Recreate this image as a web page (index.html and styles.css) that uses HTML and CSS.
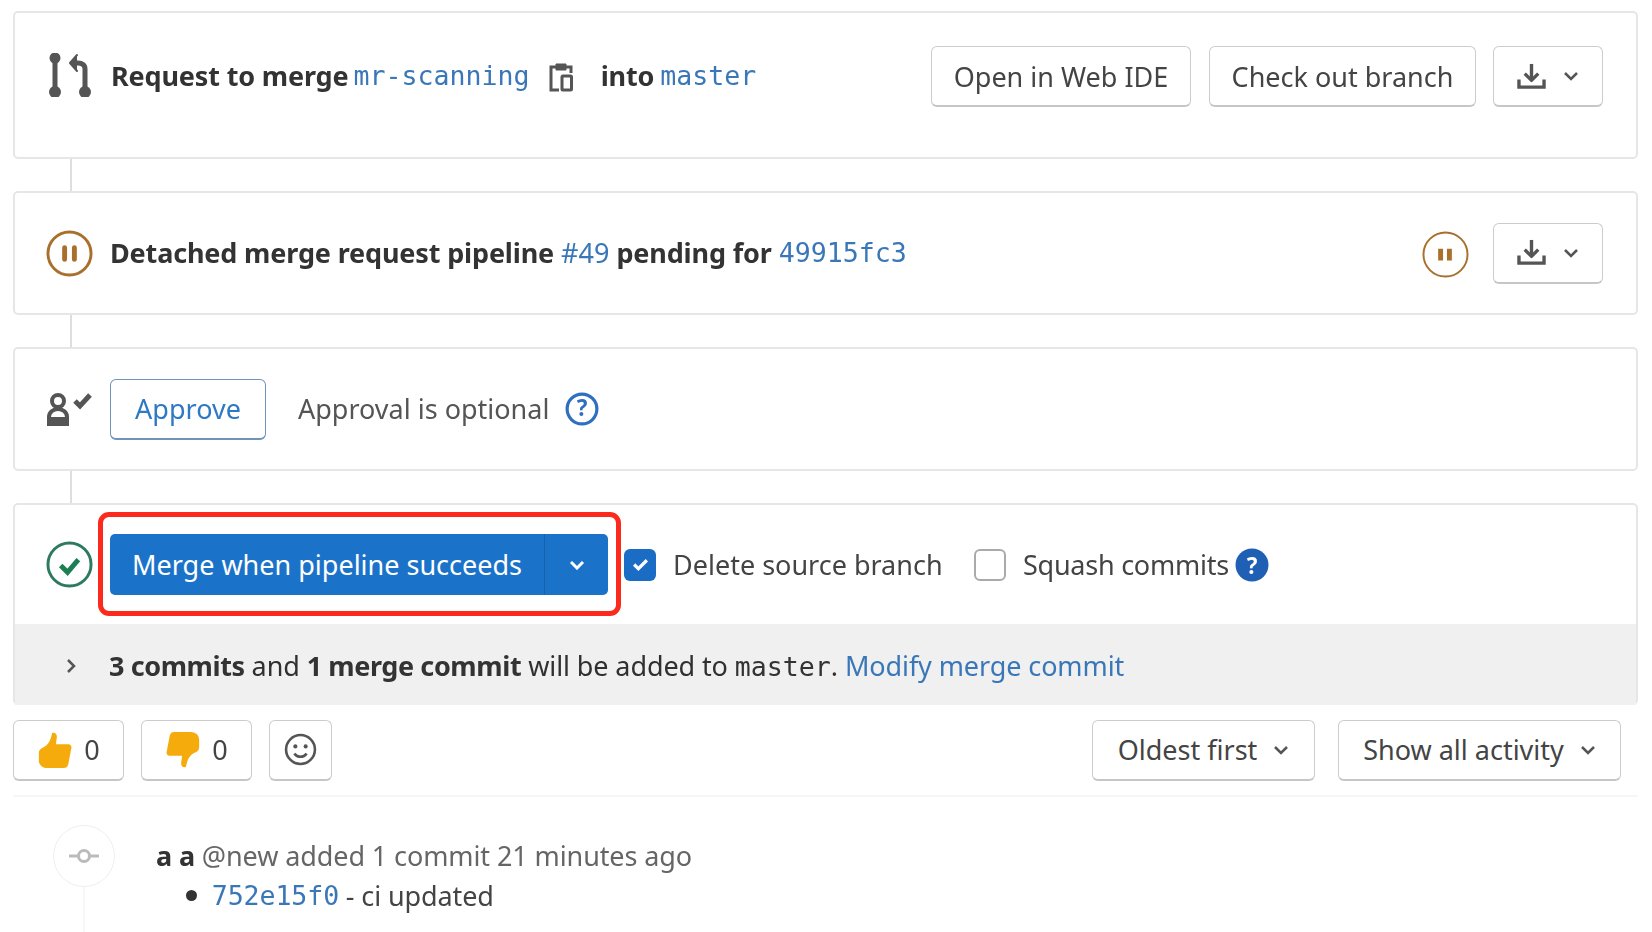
FILE: index.html
```html
<!DOCTYPE html>
<html lang="en">
<head>
	<meta charset="UTF-8">
	<title>Merge request</title>
	<link rel="stylesheet" href="styles.css">
</head>
<body>
	<div class="page">
		<div class="card card-branch">
			<svg class="ico-mr" viewBox="0 0 44 44" fill="none" stroke="#555" stroke-width="5" stroke-linecap="round" stroke-linejoin="round">
				<path d="M7 4v36M37 38V16c0-4-3-6-7-6h-3"/>
				<path d="M29 2l-7 8 7 8" fill="#555" stroke-width="2"/>
				<circle cx="7" cy="5" r="3" fill="#555"/><circle cx="7" cy="39" r="3.5" fill="#555"/><circle cx="37" cy="39" r="3.5" fill="#555"/>
			</svg>
			<div class="title">
				<b>Request to merge</b><a class="mono first">mr-scanning</a>
				<svg class="ico-copy" viewBox="0 0 24 30" fill="none" stroke="#555" stroke-width="3"><path d="M7 5H2v23h8M17 5h5v6"/><path d="M7 2h10v6H7z" fill="#555" stroke-width="1"/><rect x="13" y="14" width="9.500" height="14" rx="1"/></svg>
				<b>into</b><a class="mono second">master</a>
			</div>
			<div class="actions">
				<span class="btn btn-ide">Open in Web IDE</span>
				<span class="btn btn-checkout">Check out branch</span>
				<span class="btn btn-dl">
					<svg class="ico-dl" viewBox="0 0 30 28" fill="none" stroke="#555" stroke-width="3.500"><path d="M15 1v16" /><path d="M8 11l7 7 7-7" stroke-linejoin="round"/><path d="M2 17v8h26v-8"/></svg>
					<svg class="chev" viewBox="0 0 16 10"><path d="M2 2l6 6 6-6" fill="none" stroke="#555" stroke-width="2.500"/></svg>
				</span>
			</div>
		</div>
		<div class="link-line"></div>
		<div class="card card-pipe">
			<svg class="status" viewBox="0 0 48 48"><circle cx="24" cy="24" r="22" fill="#fff" stroke="#a8702c" stroke-width="3"/><path d="M19 18v12M29 18v12" stroke="#a8702c" stroke-width="5" stroke-linecap="round"/></svg>
			<div class="title">
				<b>Detached merge request pipeline</b><a class="num">#49</a><b>pending for</b><a class="mono sha">49915fc3</a>
			</div>
			<div class="actions">
				<svg class="status status-small" viewBox="0 0 48 48"><circle cx="24" cy="24" r="22.500" fill="#fff" stroke="#a8702c" stroke-width="2"/><path d="M19 18v12M28 18v12" stroke="#a8702c" stroke-width="5"/></svg>
				<span class="btn btn-dl">
					<svg class="ico-dl" viewBox="0 0 30 28" fill="none" stroke="#555" stroke-width="3.500"><path d="M15 1v16" /><path d="M8 11l7 7 7-7" stroke-linejoin="round"/><path d="M2 17v8h26v-8"/></svg>
					<svg class="chev" viewBox="0 0 16 10"><path d="M2 2l6 6 6-6" fill="none" stroke="#555" stroke-width="2.500"/></svg>
				</span>
			</div>
		</div>
		<div class="link-line"></div>
		<div class="card card-approve">
			<svg class="ico-approve" viewBox="0 0 48 34">
				<circle cx="12" cy="9" r="6" fill="none" stroke="#555" stroke-width="4"/>
				<path d="M3 32V25a9 8 0 0 1 18 0v7z" fill="none" stroke="#555" stroke-width="4"/>
				<path d="M1 25h22v9H1z" fill="#555"/>
				<path d="M29 9l5 5 10-11" fill="none" stroke="#555" stroke-width="5"/>
			</svg>
			<span class="btn btn-approve">Approve</span>
			<span class="optional">Approval is optional</span>
			<svg class="help" viewBox="0 0 32 32"><circle cx="16" cy="16" r="14" fill="none" stroke="#2f6fc0" stroke-width="3"/><text x="16" y="23" text-anchor="middle" class="help-q">?</text></svg>
		</div>
		<div class="link-line"></div>
		<div class="card card-merge">
			<div class="merge-row">
				<svg class="status" viewBox="0 0 48 48"><circle cx="24" cy="24" r="22" fill="#fff" stroke="#2d7a5f" stroke-width="3"/><path d="M15 25l7 7 11-13" fill="none" stroke="#1a7f52" stroke-width="5"/></svg>
				<div class="merge-btn">
					<span class="merge-label">Merge when pipeline succeeds</span>
					<span class="merge-caret"><svg class="chev" viewBox="0 0 16 10"><path d="M2 2l6 6 6-6" fill="none" stroke="#fff" stroke-width="3"/></svg></span>
					<div class="annot"></div>
				</div>
				<span class="check check-on"><svg viewBox="0 0 16 12"><path d="M2 6l4 4 8-8" fill="none" stroke="#fff" stroke-width="3"/></svg></span>
				<span class="opt opt-delete">Delete source branch</span>
				<span class="check"></span>
				<span class="opt opt-squash">Squash commits</span>
				<svg class="help help-solid" viewBox="0 0 32 32"><circle cx="16" cy="16" r="15.500" fill="#1f5fb4"/><text x="16" y="24" text-anchor="middle" class="help-q help-w">?</text></svg>
			</div>
			<div class="merge-foot">
				<svg class="foot-chev" viewBox="0 0 10 16"><path d="M2 2l6 6-6 6" fill="none" stroke="#555" stroke-width="2.500"/></svg>
				<span class="foot-text"><b>3 commits</b> and <b>1 merge commit</b> will be added to <code>master</code>. <a>Modify merge commit</a></span>
			</div>
		</div>
		<div class="award-row">
			<span class="btn btn-award">
				<svg class="emoji" viewBox="0 0 36 40"><path d="M15 2c3-1 5 1 5 4l-1 8h13c3 0 4 3 3 5l-3 16c-1 3-2 4-5 4H10c-5 0-9-3-9-8V23c0-3 2-5 5-6 4-2 7-6 8-11z" fill="#f6ab0c"/></svg>
				<span>0</span>
			</span>
			<span class="btn btn-award">
				<svg class="emoji" viewBox="0 0 36 40"><path d="M21 38c-3 1-5-1-5-4l1-8H4c-3 0-4-3-3-5L4 5c1-3 2-4 5-4h17c5 0 9 3 9 8v8c0 3-2 5-5 6-4 2-7 6-8 11z" fill="#f6ab0c"/></svg>
				<span>0</span>
			</span>
			<span class="btn btn-smile">
				<svg viewBox="0 0 32 32"><circle cx="16" cy="16" r="14" fill="none" stroke="#555" stroke-width="2.500"/><circle cx="11" cy="13" r="2" fill="#555"/><circle cx="21" cy="13" r="2" fill="#555"/><path d="M10 20c3 4 9 4 12 0" fill="none" stroke="#555" stroke-width="2.500"/></svg>
			</span>
			<div class="sorters">
				<span class="btn btn-oldest">Oldest first<svg class="chev" viewBox="0 0 16 10"><path d="M2 2l6 6 6-6" fill="none" stroke="#555" stroke-width="2.500"/></svg></span>
				<span class="btn btn-show">Show all activity<svg class="chev" viewBox="0 0 16 10"><path d="M2 2l6 6 6-6" fill="none" stroke="#555" stroke-width="2.500"/></svg></span>
			</div>
		</div>
		<div class="note">
			<div class="note-side">
				<span class="note-circle"><svg viewBox="0 0 32 16"><path d="M1 8h9M22 8h9" stroke="#bbb" stroke-width="3"/><circle cx="16" cy="8" r="5.500" fill="none" stroke="#bbb" stroke-width="3"/></svg></span>
				<div class="note-line"></div>
			</div>
			<div class="note-body">
				<div class="note-head"><b>a a</b> @new added 1 commit 21 minutes ago</div>
				<div class="note-commit"><i class="dot"></i><a class="mono">752e15f0</a> - ci updated</div>
			</div>
		</div>
	</div>
</body>
</html>
```

FILE: styles.css
```css
*{
	padding:0;
	margin:0;
	box-sizing:border-box;
}
html,body{
	height:100%;
	overflow:hidden;
	background-color:#fff;
}
body{
	color:#303030;
	font-family:"Noto Sans","Liberation Sans",sans-serif;
	font-size:27px;
}
.page{
	padding:11px 14px 0 13px;
	filter:blur(.4px);
}
a{
	color:#3a77b8;
}
b{
	letter-spacing:-.15px;
}
.mono,code{
	font-family:"DejaVu Sans Mono","Liberation Mono",monospace;
	font-size:26.6px;
}

/* cards */
.card{
	display:flex;
	border:2px solid #e6e6e6;
	border-radius:5px;
	background-color:#fff;
}
.card-branch{
	height:148px;
	padding:33px 33px 0 33px;
	align-items:flex-start;
}
.card-pipe{
	height:124px;
	padding:0 33px 0 31px;
	align-items:center;
}
.card-approve{
	height:124px;
	padding:0 31px;
	align-items:center;
}
.card-merge{
	display:block;
	height:202px;
}
.link-line{
	width:2px;
	height:32px;
	margin-left:57px;
	background-color:#dedede;
}
.title{
	display:flex;
	align-items:center;
	height:46px;
}
.card-branch .title{
	margin-top:6px;
}
.card-pipe .title{
	margin-top:-2px;
}
.title b{
	color:#333;
}
.first{
	margin-left:5px;
}
.second{
	margin-left:6px;
}
.num{
	margin:0 7px;
}
.sha{
	margin-left:7px;
}
.actions{
	display:flex;
	align-items:center;
	margin-left:auto;
}

/* buttons */
.btn{
	display:flex;
	align-items:center;
	justify-content:center;
	height:61px;
	border:1px solid #ccc;
	border-bottom:2px solid #c6c6c6;
	border-radius:6px;
	color:#444;
	background-color:#fff;
}
.btn-ide{
	width:260px;
	margin-right:18px;
}
.btn-checkout{
	width:267px;
	margin-right:17px;
}
.btn-dl{
	width:110px;
	gap:17px;
}
.ico-mr{
	flex:none;
	width:44px;
	height:44px;
	margin:7px 19px 0 0;
}
.ico-copy{
	flex:none;
	width:24px;
	height:30px;
	margin:4px 28px 0 19px;
}
.ico-dl{
	width:29px;
	height:27px;
}
.chev{
	width:16px;
	height:10px;
}
.status{
	flex:none;
	width:47px;
	height:47px;
	margin-right:17px;
}
.status-small{
	margin:2px 24px 0 0;
}
.ico-approve{
	flex:none;
	width:48px;
	height:34px;
	margin-right:16px;
}
.btn-approve{
	width:156px;
	border-color:#6f93ba;
	color:#2f79c4;
}
.optional{
	margin:-2px 0 0 32px;
	color:#555;
}
.help{
	flex:none;
	width:34px;
	height:34px;
	margin-left:16px;
}
.help-q{
	font-family:"Noto Sans",sans-serif;
	font-size:21px;
	font-weight:700;
	fill:#2f6fc0;
}
.help-w{
	fill:#fff;
}

/* merge box */
.merge-row{
	display:flex;
	align-items:center;
	height:119px;
	padding:0 31px;
}
.merge-row .status{
	margin:0 17px 0 0;
}
.merge-btn{
	position:relative;
	display:flex;
	align-items:center;
	flex:none;
	width:498px;
	height:61px;
	border-radius:5px;
	color:#fff;
	background-color:#1b73c9;
}
.merge-label{
	width:435px;
	text-align:center;
	border-right:1px solid #1762ac;
	line-height:61px;
}
.merge-caret{
	display:flex;
	justify-content:center;
	flex:1;
}
.annot{
	position:absolute;
	top:-22px;
	right:-13px;
	bottom:-21px;
	left:-12px;
	border:5px solid #fb2a1d;
	border-radius:11px;
}
.check{
	flex:none;
	width:32px;
	height:32px;
	margin-left:16px;
	border:2px solid #aaa;
	border-radius:6px;
}
.check-on{
	display:flex;
	align-items:center;
	justify-content:center;
	border:0;
	background-color:#1b6cc4;
}
.check-on svg{
	width:17px;
	height:13px;
}
.check + .opt{
	margin-left:17px;
	color:#444;
}
.opt-delete{
	width:284px;
	margin-right:17px;
}
.opt-delete + .check{
	margin-left:0;
}
.opt-squash{
	width:212px;
	letter-spacing:-.25px;
}
.help-solid{
	margin-left:0;
}
.merge-foot{
	display:flex;
	align-items:center;
	height:81px;
	padding-top:2px;
	background-color:#f0f0f0;
	letter-spacing:-.1px;
}
.foot-chev{
	flex:none;
	width:10px;
	height:16px;
	margin:0 33px 0 51px;
}
.foot-text b,.foot-text code{
	color:#333;
}
.foot-text b{
	letter-spacing:-.4px;
}
.foot-text code{
	letter-spacing:0;
}

/* awards + sort */
.award-row{
	display:flex;
	align-items:center;
	height:92px;
	padding:15px 17px 15px 0;
	border-bottom:2px solid #f6f6f6;
}
.award-row .btn{
	flex:none;
}
.btn-award{
	width:111px;
	margin-right:17px;
	gap:11px;
}
.emoji{
	width:36px;
	height:38px;
}
.btn-smile{
	width:63px;
}
.btn-smile svg{
	width:33px;
	height:33px;
}
.sorters{
	display:flex;
	margin-left:auto;
}
.btn-oldest{
	width:223px;
	gap:16px;
	margin-right:23px;
}
.btn-show{
	width:283px;
	gap:16px;
}

/* system note */
.note{
	display:flex;
}
.note-side{
	flex:none;
	width:143px;
	padding:28px 0 0 40px;
}
.note-circle{
	display:flex;
	align-items:center;
	justify-content:center;
	width:62px;
	height:62px;
	border:1px solid #eee;
	border-radius:50%;
}
.note-circle svg{
	width:32px;
	height:16px;
}
.note-line{
	width:2px;
	height:60px;
	margin-left:30px;
	background-color:#f8f8f8;
}
.note-body{
	padding-top:40px;
	color:#666;
	letter-spacing:-.1px;
}
.note-head{
	height:40px;
}
.note-head b{
	color:#333;
}
.note-commit{
	display:flex;
	align-items:center;
	gap:.25em;
	color:#444;
}
.dot{
	width:11px;
	height:11px;
	margin:0 8px 0 30px;
	border-radius:50%;
	background-color:#333;
}
```
